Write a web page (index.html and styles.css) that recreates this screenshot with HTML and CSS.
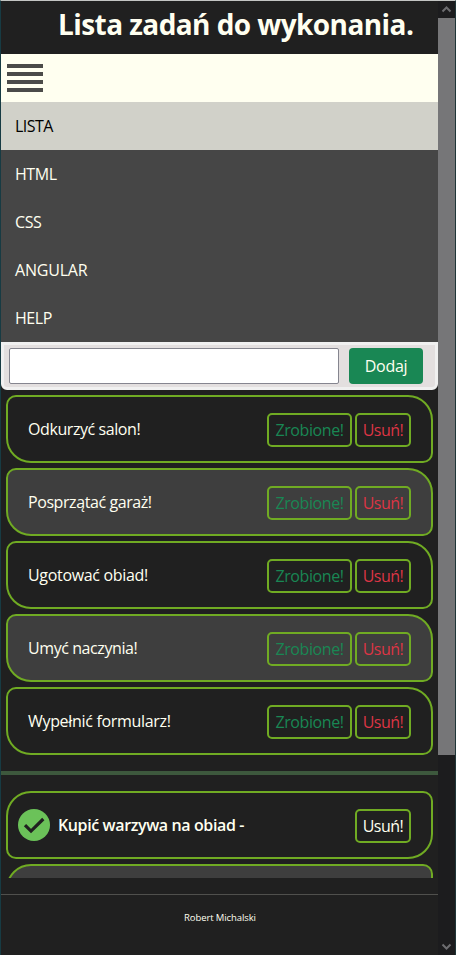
FILE: index.html
```html
<!DOCTYPE html>
<html lang="pl">
<head>
<meta charset="utf-8">
<title>Lista zadań</title>
<link rel="stylesheet" href="styles.css">
</head>
<body>
<div class="page">
  <header class="header"><h1 class="title">Lista zadań do wykonania.</h1></header>
  <div class="navbar"><div class="burger"><i></i><i></i><i></i><i></i></div></div>
  <nav class="menu">
    <a class="active"><span class="tight">LISTA</span></a>
    <a><span>HTML</span></a>
    <a><span>CSS</span></a>
    <a><span class="wide">ANGULAR</span></a>
    <a><span>HELP</span></a>
  </nav>
  <form class="add"><input class="field" type="text"><button class="submit" type="button">Dodaj</button></form>
  <main class="lists">
    <ul class="todo">
      <li class="card"><span class="task">Odkurzyć salon!</span><button class="btn done">Zrobione!</button><button class="btn remove">Usuń!</button></li>
      <li class="card"><span class="task">Posprzątać garaż!</span><button class="btn done">Zrobione!</button><button class="btn remove">Usuń!</button></li>
      <li class="card"><span class="task loose">Ugotować obiad!</span><button class="btn done">Zrobione!</button><button class="btn remove">Usuń!</button></li>
      <li class="card"><span class="task">Umyć naczynia!</span><button class="btn done">Zrobione!</button><button class="btn remove">Usuń!</button></li>
      <li class="card"><span class="task loose">Wypełnić formularz!</span><button class="btn done">Zrobione!</button><button class="btn remove">Usuń!</button></li>
    </ul>
    <div class="divider"></div>
    <ul class="finished">
      <li class="card"><svg class="check" viewBox="0 0 32 32"><circle cx="16" cy="16" r="16" fill="#6bc259"/><path d="M7 16.200l6 5.900L25.300 10" fill="none" stroke="#202020" stroke-width="3.200"/></svg><span class="task">Kupić warzywa na obiad -</span><button class="btn">Usuń!</button></li>
      <li class="card"></li>
    </ul>
  </main>
  <footer class="footer"><span>Robert Michalski</span></footer>
</div>
<div class="scrollbar">
  <div class="arrow"><svg viewBox="0 0 17 17"><path d="M4.500 10.500l4-4 4 4"/></svg></div>
  <div class="thumb"></div>
  <div class="track"></div>
  <div class="arrow"><svg viewBox="0 0 17 17"><path d="M4.500 6.500l4 4 4-4"/></svg></div>
</div>
</body>
</html>
```
FILE: styles.css
```css
* { box-sizing: border-box; }
html, body { height: 955px; overflow: hidden; }
body {
  margin: 0;
  display: flex;
  border-top: 1px solid #c3c5c3;
  border-left: 1px solid #173b43;
  border-right: 1px solid #203638;
  background: #202020;
  color: ivory;
  font-family: "Open Sans", "Noto Sans", sans-serif;
  font-size: 16px;
  line-height: 24px;
}
button { font: inherit; margin: 0; }
ul { margin: 0; padding: 0; list-style: none; }
.page { width: 437px; height: 954px; display: flex; flex-direction: column; }
.header { height: 53px; padding-left: 57px; flex: none; }
.title { margin: 0; font-size: 28px; line-height: 47px; font-weight: 700; white-space: nowrap; letter-spacing: -0.57px; }
.navbar { height: 48px; background: ivory; padding: 10px 6px; flex: none; }
.burger { width: 36px; display: grid; gap: 4px; }
.burger i { height: 4px; background: #4b4b49; }
.menu a { display: flex; align-items: center; height: 48px; padding-left: 14px; background: #464646; letter-spacing: -0.45px; }
.menu .active { background: #d1d1c9; color: #000; }
.menu .tight { letter-spacing: -0.55px; }
.menu .wide { letter-spacing: -0.2px; }
.add {
  height: 48px; flex: none; display: flex; gap: 10px;
  padding: 3px 5px; background: #e3dfdf;
  border: 3px solid #f0f0f0; border-radius: 0 0 6px 6px;
}
.field { width: 330px; height: 36px; background: #fff; border: 1px solid #85858f; border-radius: 2px; outline: 0; }
.submit { width: 74px; height: 36px; padding: 0; border: 0; border-radius: 4px; background: #198754; color: ivory; letter-spacing: -0.3px; }
.lists { height: 488px; overflow: hidden; flex: none; padding-top: 5px; }
.card {
  height: 68px; margin: 0 5px 5px; padding: 0 20px;
  display: flex; align-items: center;
  border: 2px solid #70ab23; border-radius: 10px 25px;
}
.card:nth-child(even) { background: #3e3e3e; }
.task { flex: 1; white-space: nowrap; letter-spacing: -0.42px; }
.loose { letter-spacing: -0.32px; }
.btn {
  width: 56px; height: 34px; padding: 0; margin-top: 2px;
  border: 2px solid #70ab23; border-radius: 5px;
  background: transparent; color: ivory; letter-spacing: -0.5px;
}
.done { width: 85px; margin-right: 3px; color: #198754; letter-spacing: -0.4px; }
.remove { color: #dc3545; }
.divider { height: 4px; margin: 16px 0; background: #3d583d; }
.finished .card { border-radius: 25px 10px; padding-left: 10px; }
.finished .task { margin-left: 8px; font-weight: 600; letter-spacing: -0.38px; }
.check { width: 32px; height: 32px; }
.footer { margin-top: 16px; border-top: 1px solid #50504d; text-align: center; font-size: 9.5px; letter-spacing: -0.1px; line-height: 14px; padding: 16px 0 0 1px; }
.scrollbar { width: 17px; height: 954px; display: flex; flex-direction: column; background: #1c1c1e; }
.arrow { height: 17px; }
.arrow svg { display: block; width: 17px; height: 17px; fill: none; stroke: #6d6d70; stroke-width: 2; }
.thumb { height: 737px; background: #767678; }
.track { flex: 1; }
```
